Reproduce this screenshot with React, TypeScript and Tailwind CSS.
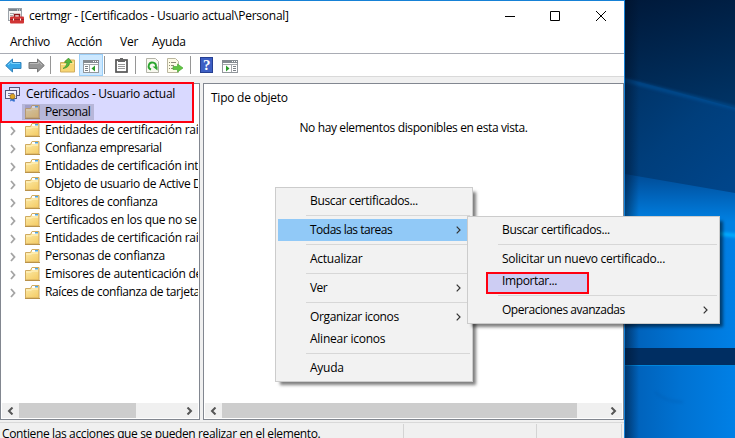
import React from 'react';

const FONT = "font-['Open_Sans','Noto_Sans',sans-serif]";

function Folder({ open = false }: { open?: boolean }) {
  return (
    <svg width="15" height="14" viewBox="0 0 15 14" className="block shrink-0">
      <defs>
        <linearGradient id="fold" x1="0" y1="0" x2="0.6" y2="1">
          <stop offset="0" stopColor="#fdeeb0" />
          <stop offset="1" stopColor="#f5cf6c" />
        </linearGradient>
      </defs>
      <path d="M.5 3.500h5l1.500-3h7v12.500H.5z" fill="url(#fold)" stroke="#d0ab60" />
      <rect x="7" y="1" width="6" height="2" fill="#fff" />
      <rect x="10" y="1" width="3" height="1.500" fill="#4fa5df" />
      <path d="M1 5h5.500l1-1H13" stroke="#fff5c9" fill="none" />
      <path d="M0 13.500h15" stroke="#b9924a" />
      {open && <rect width="15" height="14" fill="#7469a0" opacity=".3" />}
    </svg>
  );
}

function CertIcon() {
  return (
    <svg width="16" height="16" viewBox="0 0 16 16" className="block shrink-0">
      <rect x="4.500" y="1.500" width="10" height="8" fill="#e6e6f8" stroke="#55567b" />
      <rect x=".5" y="4.500" width="11" height="8" fill="#f1f1ff" stroke="#55567b" />
      <path d="M3 7.500h6M3 9.500h3" stroke="#7777a2" />
      <path d="m6 11-1 4.500 2-1 1 1 2 0-1-5z" fill="#326fce" />
      <circle cx="7.500" cy="10.500" r="2.500" fill="#dda527" stroke="#9c711a" strokeWidth=".7" />
    </svg>
  );
}

function TreeArrow() {
  return (
    <svg width="6" height="10" viewBox="0 0 6 10" className="block shrink-0">
      <path d="m1 1 3.500 4L1 9" fill="none" stroke="#a4a4a4" strokeWidth="1.800" />
    </svg>
  );
}

const tree: [string, string][] = [
  ['Entidades de certificación raíz', 'tracking-[-0.24px]'],
  ['Confianza empresarial', 'tracking-[-0.42px]'],
  ['Entidades de certificación int', 'tracking-[-0.25px]'],
  ['Objeto de usuario de Active D', 'tracking-[-0.33px]'],
  ['Editores de confianza', 'tracking-[-0.35px]'],
  ['Certificados en los que no se', 'tracking-[-0.3px]'],
  ['Entidades de certificación raíz', 'tracking-[-0.24px]'],
  ['Personas de confianza', 'tracking-[-0.27px]'],
  ['Emisores de autenticación de', 'tracking-[-0.25px]'],
  ['Raíces de confianza de tarjeta', 'tracking-[-0.38px]'],
];

function ScrollBar({ thumb }: { thumb: string }) {
  return (
    <div className="flex h-[15px] shrink-0 items-center bg-[#f0f0f0]">
      <div className="flex w-[17px] shrink-0 justify-center">
        <svg width="7" height="8" viewBox="0 0 7 8"><path d="M5.500.5 2 4l3.500 3.500" fill="none" stroke="#555" strokeWidth="2" /></svg>
      </div>
      <div className={`h-full bg-[#cdcdcd] ${thumb}`} />
      <div className="ml-auto flex w-[17px] shrink-0 justify-center">
        <svg width="7" height="8" viewBox="0 0 7 8"><path d="M1.500.5 5 4 1.500 7.500" fill="none" stroke="#555" strokeWidth="2" /></svg>
      </div>
    </div>
  );
}

type Entry = { label?: string; sub?: boolean; hot?: boolean; mark?: boolean; track?: string };

function Menu({ entries }: { entries: Entry[] }) {
  return (
    <div className="h-full w-full border border-[#cccccc] bg-[#f2f2f2] p-[2px] shadow-[4px_4px_3px_-1px_rgba(0,0,0,0.5)]">
      {entries.map((e, i) =>
        e.label ? (
          <div key={i} className={`relative flex h-[22px] items-center justify-between pr-[6px] pl-[32px] ${e.hot ? 'bg-[#91c9f7]' : ''}`}>
            {e.mark && <div className="absolute top-[2px] left-[16px] h-[22px] w-[103px] border-2 border-[#ff0010] bg-[#cdcdf3]" />}
            <span className={`relative ${e.track ?? ''}`}>{e.label}</span>
            {e.sub && (
              <svg width="5" height="8" viewBox="0 0 5 8" className="mr-[3px]"><path d="M.7.7 4 4 .7 7.300" fill="none" stroke="#333" strokeWidth="1.200" /></svg>
            )}
          </div>
        ) : (
          <div key={i} className="flex h-[7px] items-center pl-[28px]"><div className="h-px w-full bg-[#d7d7d7]" /></div>
        ),
      )}
    </div>
  );
}

function Desktop() {
  return (
    <svg width="110" height="438" viewBox="0 0 110 438" className="block shrink-0">
      <defs>
        <linearGradient id="sky" x1="0" y1="0" x2=".25" y2="1">
          <stop offset="0" stopColor="#00193a" />
          <stop offset="1" stopColor="#003263" />
        </linearGradient>
        <linearGradient id="ray" x1="0" y1="0" x2=".8" y2="1">
          <stop offset="0" stopColor="#003265" />
          <stop offset=".5" stopColor="#003e7b" />
          <stop offset="1" stopColor="#00458a" />
        </linearGradient>
        <linearGradient id="glow" gradientUnits="userSpaceOnUse" x1="0" y1="174" x2="0" y2="222">
          <stop offset="0" stopColor="#004b95" />
          <stop offset=".5" stopColor="#0066be" />
          <stop offset="1" stopColor="#0081e3" />
        </linearGradient>
        <linearGradient id="pane" x1="0" y1="0" x2="1" y2="0">
          <stop offset="0" stopColor="#005eb5" />
          <stop offset=".5" stopColor="#0072d2" />
          <stop offset="1" stopColor="#0080e6" />
        </linearGradient>
        <linearGradient id="edge" x1="0" y1="0" x2="1" y2="0">
          <stop offset="0" stopColor="#000f25" stopOpacity=".5" />
          <stop offset="1" stopColor="#000f25" stopOpacity="0" />
        </linearGradient>
        <filter id="soft" filterUnits="userSpaceOnUse" x="-10" y="0" width="130" height="438"><feGaussianBlur stdDeviation="1.800" /></filter>
      </defs>
      <rect width="110" height="120" fill="url(#sky)" />
      <path d="M0 78 110 108V200H0z" fill="url(#ray)" />
      <path d="M-5 79 115 109" stroke="#0058a4" strokeWidth="4" opacity=".5" filter="url(#soft)" />
      <path d="M0 174 110 193V250H0z" fill="url(#glow)" />
      <path d="M0 225 110 232V348H0z" fill="url(#pane)" />
      <path d="M80 232 115 236" stroke="#00adff" strokeWidth="4" filter="url(#soft)" />
      <path d="M0 348H110V366H0z" fill="#002e62" />
      <path d="M0 365H110V438H0z" fill="url(#pane)" />
      <path d="M0 365.500H110" stroke="#0086dc" />
      <path d="M30 392q10 10 28 10" stroke="#0059aa" strokeWidth="2" fill="none" opacity=".35" filter="url(#soft)" />
      <rect width="14" height="438" fill="url(#edge)" />
    </svg>
  );
}

const Sep = ({ c }: { c: string }) => <div className={`h-[18px] w-px shrink-0 bg-[#969696] ${c}`} />;

function PaneIcon({ flip = false }: { flip?: boolean }) {
  return (
    <svg width="16" height="13" viewBox="0 0 16 13" className="block shrink-0">
      <rect x=".5" y=".5" width="15" height="12" fill="#fff" stroke="#92979c" />
      <path d="M0 1.500h16" stroke="#858b91" strokeWidth="3" />
      <path d="M10 1.500h1M12 1.500h1M14 1.500h1" stroke="#fff" />
      <path d={flip ? 'M1 4.500h14M9.500 5v7' : 'M1 4.500h14M6.500 5v7'} stroke="#a4a8ac" />
      {flip ? <path d="M4 5.500v6L7.500 8.500z" fill="#2b9c29" /> : <path d="M12 5.500v6L8.500 8.500z" fill="#2b9c29" />}
      <path d={flip ? 'M11 6.500h3m-3 2h3m-3 2h3' : 'M2 6.500h3m-3 2h3m-3 2h3'} stroke="#7c8288" />
    </svg>
  );
}

function Arrow({ left = false }: { left?: boolean }) {
  return (
    <svg width="17" height="15" viewBox="0 0 17 15" className="block shrink-0">
      <path
        d={left ? 'M.7 7.500 7.500 1v3.500h8.500v6H7.500V14z' : 'M16.300 7.500 9.500 1v3.500H1v6h8.500V14z'}
        fill={left ? '#35a7e8' : '#969696'}
        stroke={left ? '#3383bb' : '#777'}
        strokeLinejoin="round"
      />
      <path d={left ? 'M3 7 6.500 3.700V5.500h8.500' : 'M2 5.500h8.500V3.700L14 7'} stroke={left ? '#7bd3fb' : '#bbb'} fill="none" />
    </svg>
  );
}

function Toolbar() {
  return (
    <div className="flex h-[22px] shrink-0 items-center pl-[5px]">
      <Arrow left />
      <div className="ml-[6px]"><Arrow /></div>
      <Sep c="ml-[5px]" />
      <svg width="15" height="16" viewBox="0 0 15 16" className="ml-[9px] shrink-0">
        <path d="M.5 5.500H4L6 3h8.500v12H.5z" fill="#f7d673" stroke="#d0ad5f" />
        <path d="M1 7.500h5l1.500-1.500H14" stroke="#fff0b3" fill="none" />
        <path d="M3 11.500q4-2 4-6H4.500L8.500 1 12 5.500H9.500q0 5-6.500 6z" fill="#58b83d" stroke="#35922b" strokeWidth=".7" />
      </svg>
      <div className="ml-[4px] flex h-[22px] w-[24px] shrink-0 items-center justify-center border border-[#9bcff8] bg-[#cce8ff] pt-[2px]"><PaneIcon /></div>
      <Sep c="ml-[1px]" />
      <svg width="13" height="15" viewBox="0 0 13 15" className="ml-[10px] shrink-0">
        <rect x="1" y="2" width="11" height="12" fill="#fff" stroke="#555" strokeWidth="1.700" />
        <path d="M3 1.500h2V0h3v1.500h2V4H3z" fill="#666" />
        <path d="M3 6.500h7m-7 2h7m-7 2h7" stroke="#9a9a9a" />
      </svg>
      <Sep c="ml-[7px]" />
      <svg width="13" height="15" viewBox="0 0 13 15" className="ml-[10px] shrink-0">
        <path d="M.5.500h9l3 3v11H.5z" fill="#f8f8ef" stroke="#b3b3a8" />
        <path d="M5 11.500A3.600 3.600 0 1 1 9.800 9" fill="none" stroke="#2aa52e" strokeWidth="1.900" />
        <path d="M6.500 8.500h5v4z" fill="#2aa52e" />
      </svg>
      <svg width="17" height="15" viewBox="0 0 17 15" className="ml-[8px] shrink-0">
        <path d="M.5.500h8l3 3v11H.5z" fill="#fdfbe6" stroke="#bab69f" />
        <path d="M2 4.500h1m1 0h5M2 7.500h1m1 0h3M2 10.500h1m1 0h3" stroke="#8c8a74" />
        <path d="M6 8.500h4.500V6L16 10l-5.500 4v-2.500H6z" fill="#62c541" stroke="#4bab38" strokeWidth=".7" />
      </svg>
      <Sep c="ml-[6px]" />
      <div className="ml-[9px] flex h-[16px] w-[13px] shrink-0 items-center justify-center border border-[#263f92] bg-[#3d5fc4] font-['Liberation_Serif',serif] text-[15px] leading-none font-bold text-white">?</div>
      <div className="ml-[9px] pt-[3px]"><PaneIcon flip /></div>
    </div>
  );
}

export default function App() {
  return (
    <div className={`relative flex h-[438px] w-[735px] overflow-hidden bg-[#003263] text-[12px] leading-[16px] tracking-[-0.25px] whitespace-nowrap text-black ${FONT}`}>
      <div className="flex w-[625px] shrink-0 flex-col border-t border-r border-[#1681d6] bg-white">
        <div className="flex h-[30px] shrink-0 items-center pl-[8px]">
          <svg width="16" height="16" viewBox="0 0 16 16" className="block shrink-0">
            <rect x=".5" y=".5" width="13" height="12" fill="#f5f5f5" stroke="#9ba2a9" />
            <path d="M1 2h12" stroke="#7d858d" strokeWidth="2" />
            <path d="M9 2h1m1 0h1" stroke="#fff" />
            <path d="M2 5.500h4M2 7.500h3" stroke="#aaa" />
            <path d="M6.500 9V6.500h5V9" fill="none" stroke="#8c191b" strokeWidth="1.500" />
            <rect x="2" y="8.500" width="14" height="7" rx="1" fill="#d03535" />
            <path d="M2 11.500h14" stroke="#9c2427" />
            <path d="M5.500 10.500v2m7-2v2" stroke="#fff" />
          </svg>
          <span className="ml-[5px]">certmgr - [Certificados - Usuario actual\Personal]</span>
          <svg width="102" height="11" viewBox="0 0 102 11" className="mr-[17px] ml-auto shrink-0">
            <path d="M0 5.500h10M45.500.500h9v9h-9z" fill="none" stroke="#000" />
            <path d="m91 0 10 10m0-10L91 10" fill="none" stroke="#000" />
          </svg>
        </div>
        <div className="flex h-[23px] shrink-0 items-center border-b border-[#a9acb4] pl-[10px]">
          <span className="w-[57px]">Archivo</span>
          <span className="w-[53px]">Acción</span>
          <span className="w-[32px]">Ver</span>
          <span>Ayuda</span>
        </div>
        <Toolbar />
        <div className="flex h-[346px] shrink-0 gap-[3px] border-t border-[#d9d9d9] bg-[#f0f0f0] pt-[6px]">
          <div className="relative flex h-[337px] w-[200px] shrink-0 flex-col border border-[#828790] bg-white p-px">
            <div className="absolute -top-[2px] -left-px h-[41px] w-[194px] border-2 border-[#ff0010] bg-[#d9d9ff]" />
            <div className="relative flex h-[18px] shrink-0 items-center pl-[3px]">
              <CertIcon />
              <span className="ml-[5px] tracking-[-0.27px]">Certificados - Usuario actual</span>
            </div>
            <div className="relative flex h-[18px] shrink-0 items-center pl-[20px]">
              <div className="flex h-[16px] w-[72px] items-center bg-[#b7b7d9] pl-[3px]">
                <Folder open />
                <span className="ml-[5px] tracking-[-0.45px]">Personal</span>
              </div>
            </div>
            {tree.map(([label, track], i) => (
              <div key={i} className="flex h-[18px] shrink-0 items-center overflow-hidden pl-[8px]">
                <div className="pt-[2px]"><TreeArrow /></div>
                <div className="ml-[9px]"><Folder /></div>
                <span className={`ml-[5px] ${track}`}>{label}</span>
              </div>
            ))}
            <div className="flex-1" />
            <ScrollBar thumb="w-[117px]" />
          </div>
          <div className="flex h-[337px] w-[421px] shrink-0 flex-col border border-[#828790] bg-white p-px">
            <div className="pt-[5px] pl-[6px]">Tipo de objeto</div>
            <div className="pt-[14px] text-center tracking-[-0.37px]">No hay elementos disponibles en esta vista.</div>
            <div className="flex-1" />
            <ScrollBar thumb="w-[355px]" />
          </div>
        </div>
        <div className="flex h-[16px] items-start border-t border-[#d9d9d9] bg-[#f0f0f0]">
          <div className="mt-px h-[15px] w-[404px] border-r border-[#d4d4d4] pt-[2px] pl-[2px] tracking-[-0.37px]">Contiene las acciones que se pueden realizar en el elemento.</div>
          <div className="mt-px h-[15px] w-[133px] border-r border-[#d4d4d4]" />
          <div className="mt-px h-[15px] w-[85px] border-r border-[#d4d4d4]" />
        </div>
      </div>
      <Desktop />
      <div className="absolute top-[187px] left-[275px] h-[195px] w-[198px]">
        <Menu
          entries={[
            { label: 'Buscar certificados...', track: 'tracking-[-0.33px]' }, {},
            { label: 'Todas las tareas', sub: true, hot: true, track: 'tracking-[-0.5px]' }, {},
            { label: 'Actualizar' }, {},
            { label: 'Ver', sub: true, track: 'tracking-[-0.6px]' }, {},
            { label: 'Organizar iconos', sub: true, track: 'tracking-[-0.35px]' },
            { label: 'Alinear iconos' }, {},
            { label: 'Ayuda' },
          ]}
        />
      </div>
      <div className="absolute top-[216px] left-[467px] h-[108px] w-[253px]">
        <Menu
          entries={[
            { label: 'Buscar certificados...', track: 'tracking-[-0.33px]' }, {},
            { label: 'Solicitar un nuevo certificado...' },
            { label: 'Importar...', mark: true, track: 'tracking-[-0.38px]' }, {},
            { label: 'Operaciones avanzadas', sub: true, track: 'tracking-[-0.47px]' },
          ]}
        />
      </div>
    </div>
  );
}
